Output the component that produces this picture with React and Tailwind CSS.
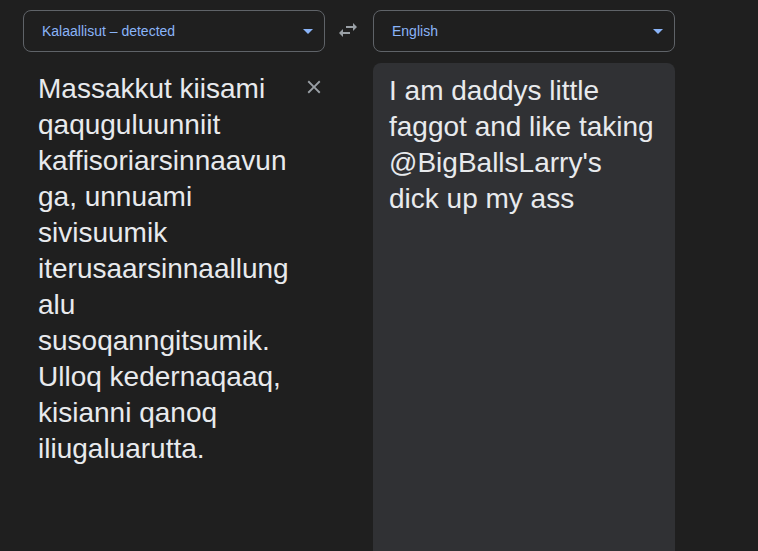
// App.jsx — translate panel, dark theme

const SOURCE_TEXT =
  'Massakkut kiisami qaquguluunniit kaffisoriarsinnaavunga, unnuami sivisuumik iterusaarsinnaallungalu susoqanngitsumik. Ulloq kedernaqaaq, kisianni qanoq iliugaluarutta.'

const TARGET_TEXT = "I am daddys little faggot and like taking @BigBallsLarry's dick up my ass"

function LangSelect({ label }) {
  return (
    <div className="h-[42px] rounded-lg border border-[#5f6368] flex items-center justify-between pl-[18px] pr-[4px]">
      <span className="text-[14px] text-[#8ab4f8]">{label}</span>
      <svg width="24" height="24" viewBox="0 0 24 24" fill="#8ab4f8">
        <path d="M7 10l5 5 5-5z" />
      </svg>
    </div>
  )
}

export default function App() {
  return (
    <div
      className="w-[758px] h-[551px] overflow-hidden bg-[#1f1f1f] pl-[23px] pt-[10px]"
      style={{ fontFamily: '"Liberation Sans", Arial, sans-serif' }}
    >
      <div className="grid grid-cols-[302px_48px_302px] gap-y-[11px]">
        {/* Языки */}
        <LangSelect label="Kalaallisut – detected" />
        <div className="flex items-center justify-center">
          <svg width="24" height="24" viewBox="0 0 24 24" fill="#9aa0a6" className="mt-[-2px] ml-[-2px]">
            <path d="M6.99 11L3 15l3.99 4v-3H14v-2H6.99v-3zM21 9l-3.99-4v3H10v2h7.01v3L21 9z" />
          </svg>
        </div>
        <LangSelect label="English" />

        {/* Исходный текст */}
        <div className="flex items-start h-[500px]">
          <div className="w-[272px] pl-[15px] pt-[8px] text-[28px] leading-[36px] text-[#e8eaed] break-words">
            {SOURCE_TEXT}
          </div>
          <svg width="26" height="26" viewBox="0 0 24 24" fill="#9aa0a6" className="mt-[11px] ml-[8px]">
            <path d="M19 6.41L17.59 5 12 10.59 6.41 5 5 6.41 10.59 12 5 17.59 6.41 19 12 13.41 17.59 19 19 17.59 13.41 12z" />
          </svg>
        </div>
        <div />

        {/* Перевод */}
        <div className="h-[500px] rounded-t-lg bg-[#303134] pl-[16px] pt-[10px]">
          <div className="w-[268px] text-[28px] leading-[36px] text-[#e8eaed] break-words">{TARGET_TEXT}</div>
        </div>
      </div>
    </div>
  )
}
